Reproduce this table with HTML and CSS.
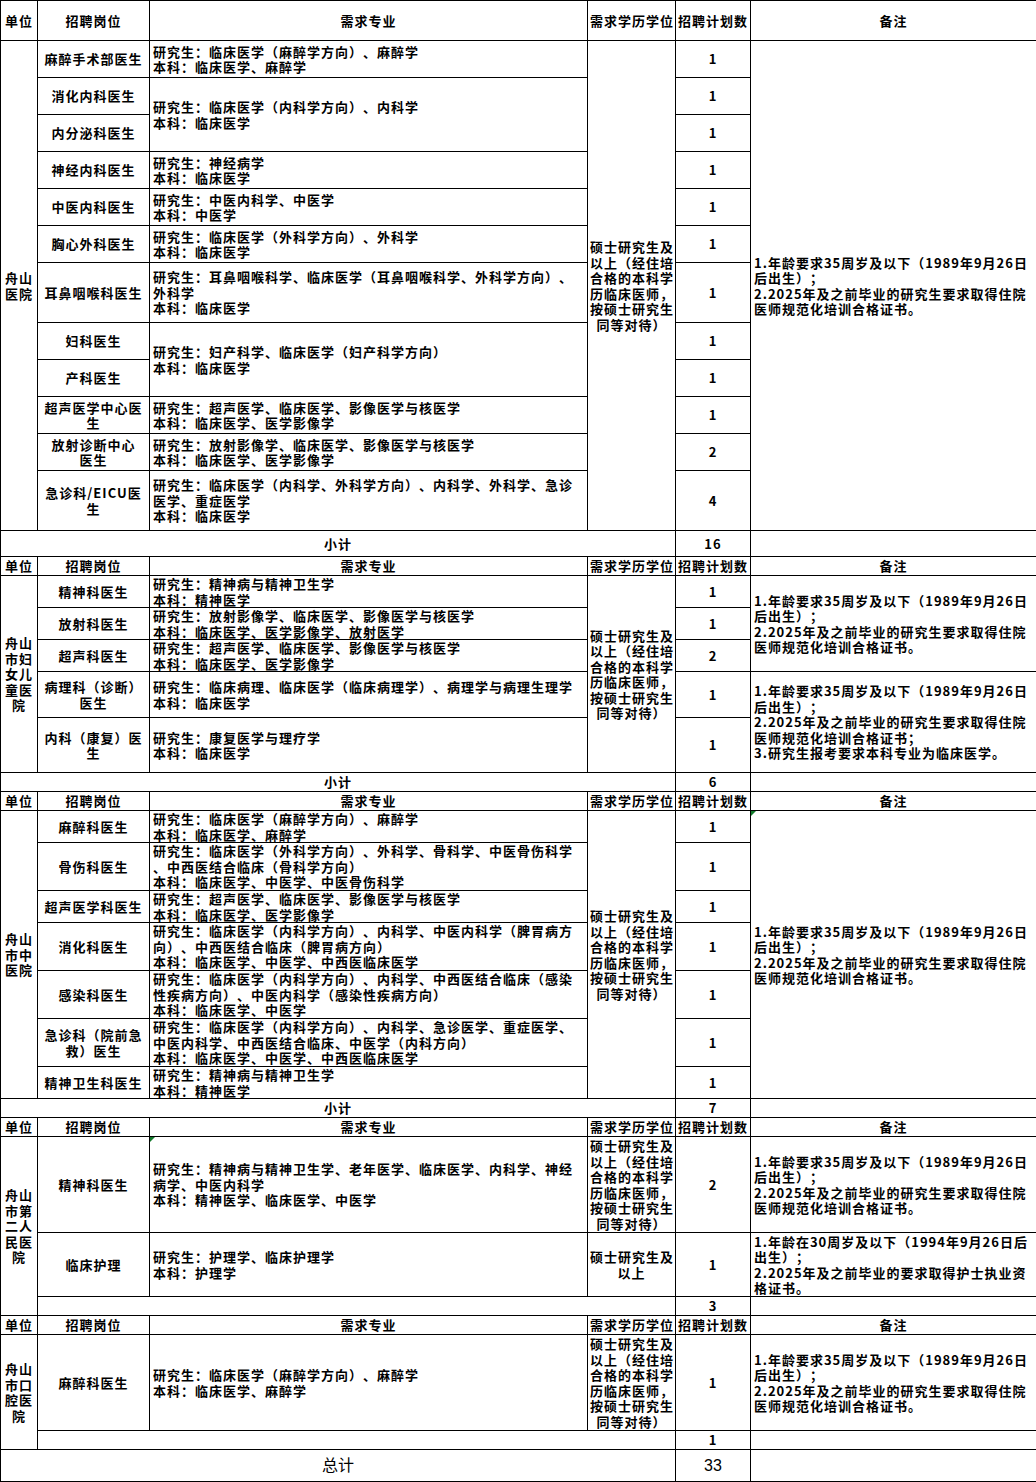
FILE: index.html
```html
<!DOCTYPE html>
<html lang="zh-CN">
<head>
<meta charset="utf-8">
<title>招聘计划表</title>
<link rel="stylesheet" href="styles.css">
</head>
<body>
<table class="plan">
<colgroup>
<col class="w-unit"><col class="w-post"><col class="w-major"><col class="w-degree"><col class="w-num"><col class="w-note">
</colgroup>
<tbody>
<tr class="h40"><td>单位</td><td>招聘岗位</td><td>需求专业</td><td>需求学历学位</td><td>招聘计划数</td><td>备注</td></tr>
<tr class="h37">
<td rowspan="12">舟山<br>医院</td>
<td>麻醉手术部医生</td>
<td class="txt">研究生：临床医学（麻醉学方向）、麻醉学<br>本科：临床医学、麻醉学</td>
<td rowspan="12">硕士研究生及<br>以上（经住培<br>合格的本科学<br>历临床医师，<br>按硕士研究生<br>同等对待）</td>
<td>1</td>
<td class="txt" rowspan="12">1.年龄要求35周岁及以下（1989年9月26日<br>后出生）；<br>2.2025年及之前毕业的研究生要求取得住院<br>医师规范化培训合格证书。</td>
</tr>
<tr class="h37"><td>消化内科医生</td><td class="txt" rowspan="2">研究生：临床医学（内科学方向）、内科学<br>本科：临床医学</td><td>1</td></tr>
<tr class="h37"><td>内分泌科医生</td><td>1</td></tr>
<tr class="h37"><td>神经内科医生</td><td class="txt">研究生：神经病学<br>本科：临床医学</td><td>1</td></tr>
<tr class="h37"><td>中医内科医生</td><td class="txt">研究生：中医内科学、中医学<br>本科：中医学</td><td>1</td></tr>
<tr class="h37"><td>胸心外科医生</td><td class="txt">研究生：临床医学（外科学方向）、外科学<br>本科：临床医学</td><td>1</td></tr>
<tr class="h60"><td>耳鼻咽喉科医生</td><td class="txt">研究生：耳鼻咽喉科学、临床医学（耳鼻咽喉科学、外科学方向）、<br>外科学<br>本科：临床医学</td><td>1</td></tr>
<tr class="h37"><td>妇科医生</td><td class="txt" rowspan="2">研究生：妇产科学、临床医学（妇产科学方向）<br>本科：临床医学</td><td>1</td></tr>
<tr class="h37"><td>产科医生</td><td>1</td></tr>
<tr class="h37"><td>超声医学中心医<br>生</td><td class="txt">研究生：超声医学、临床医学、影像医学与核医学<br>本科：临床医学、医学影像学</td><td>1</td></tr>
<tr class="h37"><td>放射诊断中心<br>医生</td><td class="txt">研究生：放射影像学、临床医学、影像医学与核医学<br>本科：临床医学、医学影像学</td><td>2</td></tr>
<tr class="h60"><td>急诊科/EICU医<br>生</td><td class="txt">研究生：临床医学（内科学、外科学方向）、内科学、外科学、急诊<br>医学、重症医学<br>本科：临床医学</td><td>4</td></tr>
<tr class="h26"><td colspan="4">小计</td><td>16</td><td></td></tr>

<tr class="h19"><td>单位</td><td>招聘岗位</td><td>需求专业</td><td>需求学历学位</td><td>招聘计划数</td><td>备注</td></tr>
<tr class="h32">
<td rowspan="5">舟山<br>市妇<br>女儿<br>童医<br>院</td>
<td>精神科医生</td>
<td class="txt">研究生：精神病与精神卫生学<br>本科：精神医学</td>
<td rowspan="5">硕士研究生及<br>以上（经住培<br>合格的本科学<br>历临床医师，<br>按硕士研究生<br>同等对待）</td>
<td>1</td>
<td class="txt" rowspan="3">1.年龄要求35周岁及以下（1989年9月26日<br>后出生）；<br>2.2025年及之前毕业的研究生要求取得住院<br>医师规范化培训合格证书。</td>
</tr>
<tr class="h32"><td>放射科医生</td><td class="txt">研究生：放射影像学、临床医学、影像医学与核医学<br>本科：临床医学、医学影像学、放射医学</td><td>1</td></tr>
<tr class="h32"><td>超声科医生</td><td class="txt">研究生：超声医学、临床医学、影像医学与核医学<br>本科：临床医学、医学影像学</td><td>2</td></tr>
<tr class="h46"><td>病理科（诊断）<br>医生</td><td class="txt">研究生：临床病理、临床医学（临床病理学）、病理学与病理生理学<br>本科：临床医学</td><td>1</td>
<td class="txt" rowspan="2">1.年龄要求35周岁及以下（1989年9月26日<br>后出生）；<br>2.2025年及之前毕业的研究生要求取得住院<br>医师规范化培训合格证书；<br>3.研究生报考要求本科专业为临床医学。</td></tr>
<tr class="h55"><td>内科（康复）医<br>生</td><td class="txt">研究生：康复医学与理疗学<br>本科：临床医学</td><td>1</td></tr>
<tr class="h19"><td colspan="4">小计</td><td>6</td><td></td></tr>

<tr class="h19"><td>单位</td><td>招聘岗位</td><td>需求专业</td><td>需求学历学位</td><td>招聘计划数</td><td>备注</td></tr>
<tr class="h32">
<td rowspan="7">舟山<br>市中<br>医院</td>
<td>麻醉科医生</td>
<td class="txt">研究生：临床医学（麻醉学方向）、麻醉学<br>本科：临床医学、麻醉学</td>
<td rowspan="7">硕士研究生及<br>以上（经住培<br>合格的本科学<br>历临床医师，<br>按硕士研究生<br>同等对待）</td>
<td>1</td>
<td class="txt flag" rowspan="7">1.年龄要求35周岁及以下（1989年9月26日<br>后出生）；<br>2.2025年及之前毕业的研究生要求取得住院<br>医师规范化培训合格证书。</td>
</tr>
<tr class="h48"><td>骨伤科医生</td><td class="txt">研究生：临床医学（外科学方向）、外科学、骨科学、中医骨伤科学<br>、中西医结合临床（骨科学方向）<br>本科：临床医学、中医学、中医骨伤科学</td><td>1</td></tr>
<tr class="h32"><td>超声医学科医生</td><td class="txt">研究生：超声医学、临床医学、影像医学与核医学<br>本科：临床医学、医学影像学</td><td>1</td></tr>
<tr class="h48"><td>消化科医生</td><td class="txt">研究生：临床医学（内科学方向）、内科学、中医内科学（脾胃病方<br>向）、中西医结合临床（脾胃病方向）<br>本科：临床医学、中医学、中西医临床医学</td><td>1</td></tr>
<tr class="h48"><td>感染科医生</td><td class="txt">研究生：临床医学（内科学方向）、内科学、中西医结合临床（感染<br>性疾病方向）、中医内科学（感染性疾病方向）<br>本科：临床医学、中医学</td><td>1</td></tr>
<tr class="h48"><td>急诊科（院前急<br>救）医生</td><td class="txt">研究生：临床医学（内科学方向）、内科学、急诊医学、重症医学、<br>中医内科学、中西医结合临床、中医学（内科方向）<br>本科：临床医学、中医学、中西医临床医学</td><td>1</td></tr>
<tr class="h32"><td>精神卫生科医生</td><td class="txt">研究生：精神病与精神卫生学<br>本科：精神医学</td><td>1</td></tr>
<tr class="h19"><td colspan="4">小计</td><td>7</td><td></td></tr>

<tr class="h19"><td>单位</td><td>招聘岗位</td><td>需求专业</td><td>需求学历学位</td><td>招聘计划数</td><td>备注</td></tr>
<tr class="h96">
<td rowspan="3">舟山<br>市第<br>二人<br>民医<br>院</td>
<td>精神科医生</td>
<td class="txt flag">研究生：精神病与精神卫生学、老年医学、临床医学、内科学、神经<br>病学、中医内科学<br>本科：精神医学、临床医学、中医学</td>
<td>硕士研究生及<br>以上（经住培<br>合格的本科学<br>历临床医师，<br>按硕士研究生<br>同等对待）</td>
<td>2</td>
<td class="txt">1.年龄要求35周岁及以下（1989年9月26日<br>后出生）；<br>2.2025年及之前毕业的研究生要求取得住院<br>医师规范化培训合格证书。</td>
</tr>
<tr class="h64"><td>临床护理</td><td class="txt">研究生：护理学、临床护理学<br>本科：护理学</td><td>硕士研究生及<br>以上</td><td>1</td>
<td class="txt">1.年龄在30周岁及以下（1994年9月26日后<br>出生）；<br>2.2025年及之前毕业的要求取得护士执业资<br>格证书。</td></tr>
<tr class="h19"><td colspan="3"></td><td>3</td><td></td></tr>

<tr class="h19"><td>单位</td><td>招聘岗位</td><td>需求专业</td><td>需求学历学位</td><td>招聘计划数</td><td>备注</td></tr>
<tr class="h96">
<td rowspan="2">舟山<br>市口<br>腔医<br>院</td>
<td>麻醉科医生</td>
<td class="txt">研究生：临床医学（麻醉学方向）、麻醉学<br>本科：临床医学、麻醉学</td>
<td>硕士研究生及<br>以上（经住培<br>合格的本科学<br>历临床医师，<br>按硕士研究生<br>同等对待）</td>
<td>1</td>
<td class="txt">1.年龄要求35周岁及以下（1989年9月26日<br>后出生）；<br>2.2025年及之前毕业的研究生要求取得住院<br>医师规范化培训合格证书。</td>
</tr>
<tr class="h19"><td colspan="3"></td><td>1</td><td></td></tr>
<tr class="h32 total"><td colspan="4">总计</td><td>33</td><td></td></tr>
</tbody>
</table>
</body>
</html>
```

FILE: styles.css
```css
html, body {
  margin: 0;
  padding: 0;
  background: #fff;
}

body {
  font-family: "Noto Sans CJK SC", sans-serif;
  font-weight: 700;
  font-size: 13px;
  color: #000;
}

.plan {
  border-collapse: collapse;
  table-layout: fixed;
  width: 1036px;
}

.w-unit { width: 37px; }
.w-post { width: 112px; }
.w-major { width: 438px; }
.w-degree { width: 88px; }
.w-num { width: 75px; }
.w-note { width: 286px; }

.plan td {
  border: 1px solid #000;
  padding: 0 2px;
  line-height: 15.5px;
  white-space: nowrap;
  text-align: center;
  vertical-align: middle;
  letter-spacing: 1px;
  text-spacing-trim: space-all;
  overflow: visible;
}

.plan td.txt {
  text-align: left;
  padding-left: 3px;
}

.h19 { height: 19px; }
.h26 { height: 26px; }
.h32 { height: 32px; }
.h37 { height: 37px; }
.h40 { height: 40px; }
.h46 { height: 46px; }
.h48 { height: 48px; }
.h55 { height: 55px; }
.h60 { height: 60px; }
.h64 { height: 64px; }
.h96 { height: 96px; }

.total td {
  font-family: "Liberation Sans", "Noto Sans CJK SC", sans-serif;
  font-size: 16px;
  font-weight: 400;
  letter-spacing: 0;
}

.flag {
  position: relative;
}

.flag::before {
  content: "";
  position: absolute;
  left: 0;
  top: 0;
  border-top: 5px solid #127a2b;
  border-right: 5px solid transparent;
}
```
